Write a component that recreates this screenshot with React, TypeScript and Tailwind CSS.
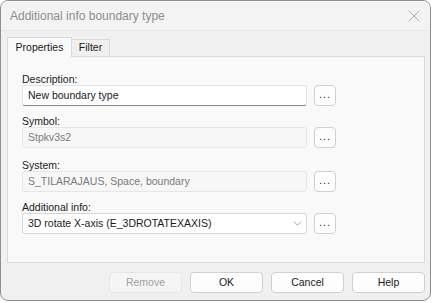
import { ChevronDown, X } from "lucide-react"

const font = { fontFamily: '"Segoe UI", "Liberation Sans", Arial, sans-serif' }

function DotsButton() {
  return (
    <button className="ml-[7px] flex h-[21px] w-[22px] shrink-0 items-end justify-center rounded-[4px] border border-[#d0d0d0] bg-[#fdfdfd] pb-[5px] text-[11px] leading-none tracking-[1px] text-[#1a1a6e]">
      ...
    </button>
  )
}

function Field({
  label,
  value,
  disabled,
  select,
  focused,
  top,
}: {
  label: string
  value: string
  disabled?: boolean
  select?: boolean
  focused?: boolean
  top: string
}) {
  return (
    <div className={top}>
      <div className="h-[16px] pt-[2px] text-[10.5px] leading-[16px] text-[#1b1b1b]">{label}</div>
      <div className="flex items-center">
        <div
          className={
            "flex h-[21px] w-[285px] items-center rounded-[3px] border pl-[5px] pr-[2px] text-[10.5px] " +
            (disabled
              ? "border-[#e6e6e6] bg-[#f7f7f7] text-[#7a7a7a]"
              : focused
              ? "border-[#e3e3e3] border-b-[#868686] bg-white text-[#1a1a1a]"
              : "border-[#d6d6d6] bg-white text-[#1a1a1a]")
          }
        >
          <span className="flex-1 truncate">{value}</span>
          {select && <ChevronDown size={13} strokeWidth={1.1} className="text-[#606060]" />}
        </div>
        <DotsButton />
      </div>
    </div>
  )
}

export default function App() {
  return (
    <div className="h-[303px] w-[433px] bg-white" style={font}>
      <div className="flex h-[301px] w-[431px] flex-col overflow-hidden rounded-[8px] border border-[#8f8f8f] bg-[#f0f0f0]">
        {/* Title bar */}
        <div className="flex h-[30px] shrink-0 items-center justify-between border-b border-[#e9e9e9] bg-[#f3f3f3] pl-[9px] pr-[6px]">
          <span className="text-[12px] text-[#8e8e8e]">Additional info boundary type</span>
          <X size={20} strokeWidth={0.8} className="text-[#8e8e8e]" />
        </div>

        {/* Tabs */}
        <div className="ml-[6px] mt-[6px] flex items-end">
          <div className="relative z-10 -mb-px flex h-[20px] w-[65px] items-center justify-center border border-b-0 border-[#dadada] bg-[#f9f9f9] text-[10.5px] text-[#1a1a1a]">
            Properties
          </div>
          <div className="flex h-[17px] w-[38px] items-center justify-center border border-b-0 border-l-0 border-[#dadada] bg-[#f0f0f0] text-[10.5px] text-[#1a1a1a]">
            Filter
          </div>
        </div>

        {/* Panel */}
        <div className="ml-[6px] h-[207px] w-[418px] border border-[#dadada] bg-[#f9f9f9] pl-[14px]">
          <Field label="Description:" value="New boundary type" focused top="mt-[12px]" />
          <Field label="Symbol:" value="Stpkv3s2" disabled top="mt-[5px]" />
          <Field label="System:" value="S_TILARAJAUS, Space, boundary" disabled top="mt-[7px]" />
          <Field label="Additional info:" value="3D rotate X-axis (E_3DROTATEXAXIS)" select top="mt-[5px]" />
        </div>

        {/* Buttons */}
        <div className="ml-[108px] mt-[9px] flex gap-[8px]">
          <button className="h-[21px] w-[73px] rounded-[4px] border border-[#e5e5e5] bg-[#f5f5f5] text-[10.5px] text-[#a0a0a0]">
            Remove
          </button>
          <button className="h-[21px] w-[73px] rounded-[4px] border border-[#d0d0d0] bg-[#fdfdfd] text-[10.5px] text-[#1a1a1a]">
            OK
          </button>
          <button className="h-[21px] w-[73px] rounded-[4px] border border-[#d0d0d0] bg-[#fdfdfd] text-[10.5px] text-[#1a1a1a]">
            Cancel
          </button>
          <button className="h-[21px] w-[73px] rounded-[4px] border border-[#d0d0d0] bg-[#fdfdfd] text-[10.5px] text-[#1a1a1a]">
            Help
          </button>
        </div>
      </div>
    </div>
  )
}
